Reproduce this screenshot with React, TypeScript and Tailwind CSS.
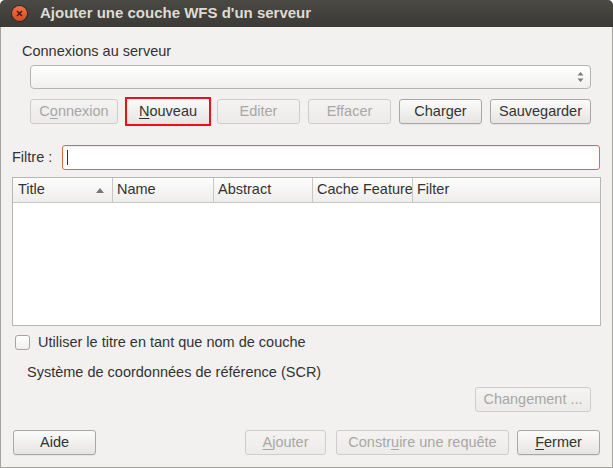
import React from 'react'

const font = { fontFamily: '"Liberation Sans", Arial, sans-serif' }

function Btn({ children, disabled, className = '' }: { children: React.ReactNode; disabled?: boolean; className?: string }) {
    return (
        <div
            className={
                'flex h-[25px] items-center justify-center rounded-[3px] border bg-gradient-to-b text-[14.5px] ' +
                (disabled
                    ? 'border-[#cfcdca] from-[#f4f3f2] to-[#ecebe9] text-[#a9a7a4] '
                    : 'border-[#a9a7a3] from-[#fbfbfa] to-[#e6e5e3] text-[#333] shadow-[0_1px_0_rgba(0,0,0,0.05)] ') +
                className
            }
        >
            {children}
        </div>
    )
}

export default function App() {
    return (
        <div style={font} className="w-[613px] h-[468px] bg-white">
            <div className="flex h-[27px] items-center rounded-t-[5px] bg-gradient-to-b from-[#4a4944] to-[#3b3a36] pl-[12px]">
                <div className="flex h-[15px] w-[15px] items-center justify-center rounded-full bg-gradient-to-b from-[#f0714a] to-[#d84a1c] shadow-[0_0_0_1px_rgba(0,0,0,0.35)]">
                    <svg width="7" height="7" viewBox="0 0 7 7">
                        <path d="M1 1 L6 6 M6 1 L1 6" stroke="#3a1a0e" strokeWidth="1.4" />
                    </svg>
                </div>
                <div className="ml-[13px] text-[15px] font-bold text-[#dfdbd2]">Ajouter une couche WFS d'un serveur</div>
            </div>

            <div className="flex h-[441px] flex-col border-x border-b border-[#a5a39f] bg-[#f2f1f0] text-[#333]">
                <div className="ml-[21px] mt-[16px] text-[14.5px] leading-[17px]">Connexions au serveur</div>

                <div className="ml-[29px] mt-[5px] flex h-[24px] w-[561px] items-center justify-end rounded-[4px] border border-[#b6b4b0] bg-gradient-to-b from-white to-[#f1f0ef] pr-[6px]">
                    <svg width="7" height="12" viewBox="0 0 7 12">
                        <path d="M3.5 1 L6.5 4.5 L0.5 4.5 Z" fill="#7a7a7a" />
                        <path d="M3.5 11 L6.5 7.5 L0.5 7.5 Z" fill="#7a7a7a" />
                    </svg>
                </div>

                <div className="ml-[29px] mt-[8px] flex items-center">
                    <Btn disabled className="w-[88px]">
                        <span>C<u className="underline-offset-2">o</u>nnexion</span>
                    </Btn>
                    <div className="ml-[7px] flex h-[29px] w-[86px] items-center justify-center border-2 border-[#ee1111] bg-gradient-to-b from-[#fbfbfa] to-[#e6e5e3] text-[14.5px]">
                        <span><u className="underline-offset-2">N</u>ouveau</span>
                    </div>
                    <Btn disabled className="ml-[6px] w-[83px]">Editer</Btn>
                    <Btn disabled className="ml-[8px] w-[83px]">Effacer</Btn>
                    <Btn className="ml-[8px] w-[83px]">Charger</Btn>
                    <Btn className="ml-[8px] w-[101px]">Sauvegarder</Btn>
                </div>

                <div className="ml-[11px] mt-[19px] flex items-center">
                    <div className="w-[50px] text-[14.5px]">Filtre :</div>
                    <div className="flex h-[25px] w-[538px] items-center rounded-[3px] border border-[#df6c3e] bg-white pl-[4px] shadow-[inset_0_1px_1px_rgba(0,0,0,0.08)]">
                        <div className="h-[15px] w-px bg-[#333]" />
                    </div>
                </div>

                <div className="ml-[11px] mt-[7px] h-[149px] w-[589px] border border-[#b8b6b2] bg-white">
                    <div className="flex h-[25px] border-b border-[#c9c7c3] bg-gradient-to-b from-[#fdfdfd] to-[#eeedec] text-[14.5px]">
                        <div className="flex w-[100px] items-center justify-between border-r border-[#c9c7c3] pl-[5px] pr-[8px]">
                            <span>Title</span>
                            <svg width="8" height="5" viewBox="0 0 8 5">
                                <path d="M4 0 L8 5 L0 5 Z" fill="#777" />
                            </svg>
                        </div>
                        <div className="flex w-[101px] items-center border-r border-[#c9c7c3] pl-[4px]">Name</div>
                        <div className="flex w-[99px] items-center border-r border-[#c9c7c3] pl-[4px]">Abstract</div>
                        <div className="flex w-[100px] items-center overflow-hidden whitespace-nowrap border-r border-[#c9c7c3] pl-[4px]">Cache Feature</div>
                        <div className="flex flex-1 items-center pl-[4px]">Filter</div>
                    </div>
                </div>

                <div className="ml-[14px] mt-[8px] flex items-center">
                    <div className="h-[15px] w-[15px] rounded-[3px] border border-[#a7a5a1] bg-gradient-to-b from-white to-[#f0efee]" />
                    <div className="ml-[8px] text-[14.5px] leading-[17px]">Utiliser le titre en tant que nom de couche</div>
                </div>

                <div className="ml-[26px] mt-[13px] text-[14.5px] leading-[17px]">Système de coordonnées de référence (SCR)</div>

                <div className="mr-[21px] mt-[6px] flex justify-end">
                    <Btn disabled className="w-[116px]">Changement ...</Btn>
                </div>

                <div className="ml-[12px] mt-[18px] flex items-center">
                    <Btn className="w-[83px]">Aide</Btn>
                    <Btn disabled className="ml-[149px] w-[81px]">
                        <span><u className="underline-offset-2">A</u>jouter</span>
                    </Btn>
                    <Btn disabled className="ml-[10px] w-[173px]">
                        <span>Constr<u className="underline-offset-2">u</u>ire une requête</span>
                    </Btn>
                    <Btn className="ml-[8px] w-[83px]">
                        <span><u className="underline-offset-2">F</u>ermer</span>
                    </Btn>
                </div>
            </div>
        </div>
    )
}
